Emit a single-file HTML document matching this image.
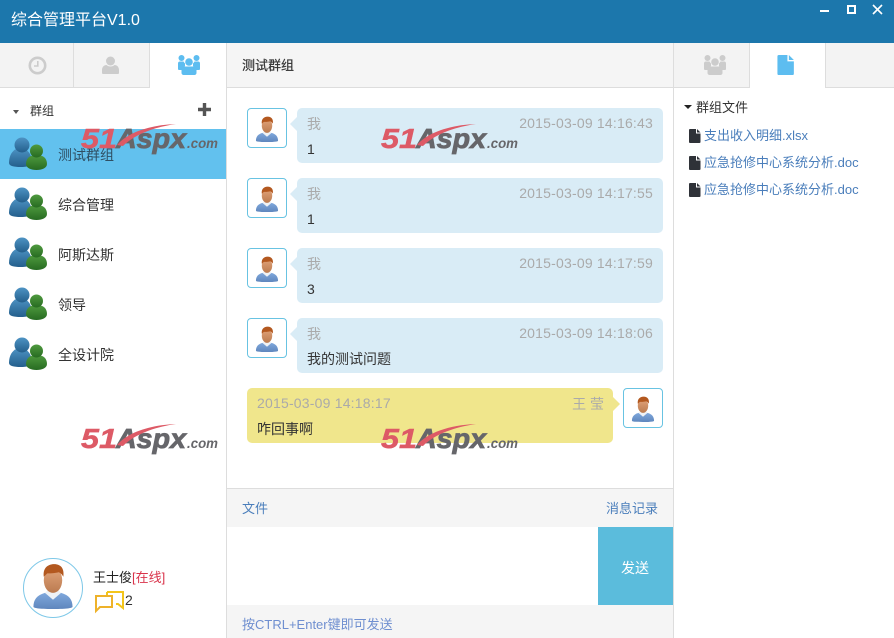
<!DOCTYPE html>
<html lang="zh">
<head>
<meta charset="utf-8">
<title>综合管理平台</title>
<style>
html,body{margin:0;padding:0;width:894px;height:638px;overflow:hidden;background:#fff}
body{position:relative;font-family:"Liberation Sans","Noto Sans CJK SC",sans-serif;font-size:13px;color:#333}
.a{position:absolute;white-space:nowrap;line-height:18px}
.l{font-size:14px;color:#333}
svg{position:absolute;display:block;overflow:visible}
.bubble{position:absolute;width:366px;height:55px;background:#d9ecf6;border-radius:5px}
.bubble:before{content:"";position:absolute;left:-7px;top:9px;border:7px solid transparent;border-left:0;border-right-color:#d9ecf6}
.bubble.y{background:#f0e68c}
.bubble.y:before{left:auto;right:-7px;border:7px solid transparent;border-right:0;border-left-color:#f0e68c}
.av{position:absolute;width:38px;height:38px;border:1px solid #68c3e2;border-radius:4px;background:#fff}
.who{position:absolute;top:7px;color:#aaa;font-size:14px;line-height:18px}
.ts{position:absolute;top:6px;color:#aaa;font-size:14px;line-height:18px;letter-spacing:.2px}
.msg{position:absolute;left:10px;top:32px;color:#333;font-size:14px;line-height:18px}
.link{color:#4a7ebb}
.wm{left:0;top:0;font-family:"Liberation Sans",sans-serif;font-weight:bold;font-style:italic}
</style>
</head>
<body>
<svg width="0" height="0" style="position:absolute">
<defs>
<linearGradient id="sk" x1="0" y1="0" x2="0" y2="1"><stop offset="0" stop-color="#e2a47a"/><stop offset="1" stop-color="#bb7b50"/></linearGradient>
<linearGradient id="sh" x1="0" y1="0" x2="0" y2="1"><stop offset="0" stop-color="#7fa8dc"/><stop offset="1" stop-color="#5f86bd"/></linearGradient>
<linearGradient id="bl" x1="0" y1="0" x2="0" y2="1"><stop offset="0" stop-color="#4d93c4"/><stop offset="1" stop-color="#245f8c"/></linearGradient>
<linearGradient id="gr" x1="0" y1="0" x2="0" y2="1"><stop offset="0" stop-color="#4f9a3e"/><stop offset="1" stop-color="#276b22"/></linearGradient>
<symbol id="person" viewBox="0 0 40 40">
<path d="M3 38c0-6 3-10 10-12l7 3 7-3c7 2 10 6 10 12 0 1-4 2-17 2S3 39 3 38z" fill="url(#sh)"/>
<path d="M13 26l7 6 7-6-2-2H15z" fill="#eef2f6"/>
<ellipse cx="20" cy="15" rx="8" ry="11" fill="url(#sk)"/>
<path d="M12 12C11 5 15 1 21 1c6 0 9 4 8 11-1-2-2-3-4-4-4 1-8 1-10 1-1 1-2 2-3 3z" fill="#b3581f"/>
</symbol>
<symbol id="msn" viewBox="0 0 38 38">
<path d="M0 27c0-9 5-15 11.500-15S23 18 23 27c0 3-5 4-11.500 4S0 30 0 27z" fill="url(#bl)"/>
<circle cx="13" cy="9" r="7.500" fill="url(#bl)"/>
<path d="M17 28c0-6 4-9 10.500-9S38 22 38 28c0 4-5 6-10.500 6S17 32 17 28z" fill="url(#gr)"/>
<circle cx="27.500" cy="15" r="6.500" fill="url(#gr)"/>
</symbol>
<symbol id="grp" viewBox="0 0 22 20">
<circle cx="3.500" cy="3" r="3"/><circle cx="18.500" cy="3" r="3"/><circle cx="11" cy="7" r="3.800"/>
<path d="M0 8.500a2 2 0 0 1 2-2h3.500q.5 1 1.500 2v2.500l-2.500 4H1a1 1 0 0 1-1-1z"/>
<path d="M22 8.500a2 2 0 0 0-2-2h-3.500q-.5 1-1.500 2v2.500l2.500 4H21a1 1 0 0 0 1-1z"/>
<path d="M7 11.500h8c2 0 3.500 1.500 3.500 3.500v3c0 1-1 2-2 2H5.500c-1 0-2-1-2-2v-3c0-2 1.500-3.500 3.500-3.500z"/>
</symbol>
<symbol id="doc" viewBox="0 0 12 14">
<path d="M1 0h6v4.500h4.500V13a1 1 0 0 1-1 1H1a1 1 0 0 1-1-1V1a1 1 0 0 1 1-1zM8 0l3.500 3.500H8z"/>
</symbol>
</defs>
</svg>

<!-- title bar -->
<div class="a" style="left:0;top:0;width:894px;height:43px;background:#1c77ac"></div>
<div class="a" style="left:11px;top:10px;font-size:16px;line-height:21px;color:#fff">综合管理平台V1.0</div>
<div class="a" style="left:820px;top:10px;width:9px;height:2px;background:#fff"></div>
<div class="a" style="left:847px;top:5px;width:5px;height:5px;border:2px solid #fff"></div>
<svg style="left:872px;top:4px" width="11" height="11"><path d="M1 1l9 9M10 1l-9 9" stroke="#fff" stroke-width="1.600" fill="none"/></svg>

<!-- left panel -->
<div class="a" style="left:0;top:43px;width:150px;height:45px;background:#f3f3f3;border-bottom:1px solid #ddd;box-sizing:border-box"></div>
<div class="a" style="left:73px;top:43px;width:1px;height:44px;background:#ddd"></div>
<div class="a" style="left:149px;top:43px;width:1px;height:45px;background:#ddd"></div>
<div class="a" style="left:226px;top:43px;width:1px;height:595px;background:#ddd"></div>
<svg style="left:28px;top:56px" width="19" height="19" viewBox="0 0 19 19"><circle cx="9.500" cy="9.500" r="7.700" fill="none" stroke="#ccc" stroke-width="2.600"/><path d="M9.800 5v5H6" fill="none" stroke="#ccc" stroke-width="1.600"/></svg>
<svg style="left:102px;top:56px;fill:#ccc" width="17" height="18" viewBox="0 0 17 18"><circle cx="8.500" cy="5" r="4.500"/><path d="M0 17v-3c0-3 2-5 4.500-5 1 1 2.500 1.500 4 1.500s3-.5 4-1.500c2.500 0 4.500 2 4.500 5v3c0 .5-.5 1-1 1H1c-.5 0-1-.5-1-1z"/></svg>
<svg style="left:178px;top:55px;fill:#5dbdf0" width="22" height="20"><use href="#grp" width="22" height="20"/></svg>

<div class="a" style="left:13px;top:110px;width:0;height:0;border:3.500px solid transparent;border-top:4px solid #555;border-bottom:0"></div>
<div class="a" style="left:30px;top:102px;font-size:12px;color:#333">群组</div>
<svg style="left:198px;top:103px" width="13" height="13"><path d="M6.500 0v13M0 6.500h13" stroke="#555" stroke-width="3.400"/></svg>

<div class="a" style="left:0;top:129px;width:226px;height:50px;background:#62c1ee"></div>
<svg style="left:9px;top:136px" width="38" height="38"><use href="#msn" width="38" height="38"/></svg>
<div class="a l" style="left:58px;top:146px;color:#2f4f63">测试群组</div>
<svg style="left:9px;top:186px" width="38" height="38"><use href="#msn" width="38" height="38"/></svg>
<div class="a l" style="left:58px;top:196px">综合管理</div>
<svg style="left:9px;top:236px" width="38" height="38"><use href="#msn" width="38" height="38"/></svg>
<div class="a l" style="left:58px;top:246px">阿斯达斯</div>
<svg style="left:9px;top:286px" width="38" height="38"><use href="#msn" width="38" height="38"/></svg>
<div class="a l" style="left:58px;top:296px">领导</div>
<svg style="left:9px;top:336px" width="38" height="38"><use href="#msn" width="38" height="38"/></svg>
<div class="a l" style="left:58px;top:346px">全设计院</div>

<!-- user -->
<div class="a" style="left:23px;top:558px;width:58px;height:58px;border:1px solid #7ec8e8;border-radius:50%;background:#fff"></div>
<svg style="left:29.500px;top:563px" width="46" height="46"><use href="#person" width="46" height="46"/></svg>
<div class="a" style="left:93px;top:569px;color:#222">王士俊<span style="color:#d9334a">[在线]</span></div>
<svg style="left:94px;top:591px" width="31" height="23" viewBox="0 0 31 23" fill="none" stroke-width="2"><path d="M13 1h16v16l-5-4h-2" stroke="#f3c51b"/><path d="M13 1v3" stroke="#f3c51b"/><path d="M2 5h16v11H6l-4 4z" stroke="#eeb22a" fill="#fff"/></svg>
<div class="a" style="left:125px;top:591px;font-size:14px">2</div>

<!-- middle -->
<div class="a" style="left:227px;top:43px;width:446px;height:44px;background:#f5f5f5;border-bottom:1px solid #ddd"></div>
<div class="a" style="left:242px;top:57px;color:#333;font-size:13px;-webkit-text-stroke:.2px #333">测试群组</div>

<div class="av" style="left:247px;top:108px"><svg style="left:6px;top:7px" width="26" height="26"><use href="#person" width="26" height="26"/></svg></div>
<div class="bubble" style="left:297px;top:108px"><div class="who" style="left:10px">我</div><div class="ts" style="right:10px">2015-03-09 14:16:43</div><div class="msg">1</div></div>
<div class="av" style="left:247px;top:178px"><svg style="left:6px;top:7px" width="26" height="26"><use href="#person" width="26" height="26"/></svg></div>
<div class="bubble" style="left:297px;top:178px"><div class="who" style="left:10px">我</div><div class="ts" style="right:10px">2015-03-09 14:17:55</div><div class="msg">1</div></div>
<div class="av" style="left:247px;top:248px"><svg style="left:6px;top:7px" width="26" height="26"><use href="#person" width="26" height="26"/></svg></div>
<div class="bubble" style="left:297px;top:248px"><div class="who" style="left:10px">我</div><div class="ts" style="right:10px">2015-03-09 14:17:59</div><div class="msg">3</div></div>
<div class="av" style="left:247px;top:318px"><svg style="left:6px;top:7px" width="26" height="26"><use href="#person" width="26" height="26"/></svg></div>
<div class="bubble" style="left:297px;top:318px"><div class="who" style="left:10px">我</div><div class="ts" style="right:10px">2015-03-09 14:18:06</div><div class="msg">我的测试问题</div></div>
<div class="bubble y" style="left:247px;top:388px"><div class="ts" style="left:10px">2015-03-09 14:18:17</div><div class="who" style="right:9px">王 莹</div><div class="msg">咋回事啊</div></div>
<div class="av" style="left:623px;top:388px"><svg style="left:6px;top:7px" width="26" height="26"><use href="#person" width="26" height="26"/></svg></div>

<div class="a" style="left:227px;top:488px;width:446px;height:39px;background:#f5f5f5;border-top:1px solid #ddd;box-sizing:border-box"></div>
<div class="a link" style="left:242px;top:500px">文件</div>
<div class="a link" style="left:606px;top:500px">消息记录</div>
<div class="a" style="left:598px;top:527px;width:75px;height:78px;background:#5bbcdc"></div>
<div class="a" style="left:621px;top:559px;font-size:14px;color:#fff">发送</div>
<div class="a" style="left:227px;top:605px;width:446px;height:33px;background:#f5f5f5"></div>
<div class="a" style="left:242px;top:616px;color:#6f8fd0">按CTRL+Enter键即可发送</div>

<!-- right -->
<div class="a" style="left:673px;top:43px;width:1px;height:595px;background:#ddd"></div>
<div class="a" style="left:674px;top:43px;width:220px;height:45px;background:#f3f3f3;border-bottom:1px solid #ddd;box-sizing:border-box"></div>
<div class="a" style="left:749px;top:43px;width:77px;height:45px;background:#fff;border-left:1px solid #ddd;border-right:1px solid #ddd;box-sizing:border-box"></div>
<svg style="left:704px;top:55px;fill:#ccc" width="22" height="20"><use href="#grp" width="22" height="20"/></svg>
<svg style="left:777px;top:55px;fill:#5dbdf0" width="18" height="20"><use href="#doc" width="18" height="20"/></svg>

<div class="a" style="left:684px;top:105px;width:0;height:0;border:4px solid transparent;border-top:4.500px solid #222;border-bottom:0"></div>
<div class="a" style="left:696px;top:99px;color:#333">群组文件</div>
<svg style="left:689px;top:129px;fill:#2f3238" width="12" height="14"><use href="#doc" width="12" height="14"/></svg>
<div class="a link" style="left:704px;top:127px">支出收入明细.xlsx</div>
<svg style="left:689px;top:156px;fill:#2f3238" width="12" height="14"><use href="#doc" width="12" height="14"/></svg>
<div class="a link" style="left:704px;top:154px">应急抢修中心系统分析.doc</div>
<svg style="left:689px;top:183px;fill:#2f3238" width="12" height="14"><use href="#doc" width="12" height="14"/></svg>
<div class="a link" style="left:704px;top:181px">应急抢修中心系统分析.doc</div>

<!-- watermarks -->
<svg class="wm" width="894" height="638" viewBox="0 0 894 638" style="left:0;top:0;pointer-events:none">
<g transform="translate(81,124)">
<text x="0" y="24" font-size="28" fill="#dd5a66" stroke="#dd5a66" stroke-width=".5" textLength="36" lengthAdjust="spacingAndGlyphs">51</text>
<text x="35" y="24" font-size="28" fill="#66666a" stroke="#66666a" stroke-width=".8" textLength="70" lengthAdjust="spacingAndGlyphs">Aspx</text>
<text x="106" y="24" font-size="14" fill="#66666a" textLength="31" lengthAdjust="spacingAndGlyphs">.com</text>
<path d="M36 21C46 9 68 1 95 0 74 3 54 10 42 22z" fill="#dd5a66"/>
</g>
<g transform="translate(381,124)">
<text x="0" y="24" font-size="28" fill="#dd5a66" stroke="#dd5a66" stroke-width=".5" textLength="36" lengthAdjust="spacingAndGlyphs">51</text>
<text x="35" y="24" font-size="28" fill="#66666a" stroke="#66666a" stroke-width=".8" textLength="70" lengthAdjust="spacingAndGlyphs">Aspx</text>
<text x="106" y="24" font-size="14" fill="#66666a" textLength="31" lengthAdjust="spacingAndGlyphs">.com</text>
<path d="M36 21C46 9 68 1 95 0 74 3 54 10 42 22z" fill="#dd5a66"/>
</g>
<g transform="translate(81,424)">
<text x="0" y="24" font-size="28" fill="#dd5a66" stroke="#dd5a66" stroke-width=".5" textLength="36" lengthAdjust="spacingAndGlyphs">51</text>
<text x="35" y="24" font-size="28" fill="#66666a" stroke="#66666a" stroke-width=".8" textLength="70" lengthAdjust="spacingAndGlyphs">Aspx</text>
<text x="106" y="24" font-size="14" fill="#66666a" textLength="31" lengthAdjust="spacingAndGlyphs">.com</text>
<path d="M36 21C46 9 68 1 95 0 74 3 54 10 42 22z" fill="#dd5a66"/>
</g>
<g transform="translate(381,424)">
<text x="0" y="24" font-size="28" fill="#dd5a66" stroke="#dd5a66" stroke-width=".5" textLength="36" lengthAdjust="spacingAndGlyphs">51</text>
<text x="35" y="24" font-size="28" fill="#66666a" stroke="#66666a" stroke-width=".8" textLength="70" lengthAdjust="spacingAndGlyphs">Aspx</text>
<text x="106" y="24" font-size="14" fill="#66666a" textLength="31" lengthAdjust="spacingAndGlyphs">.com</text>
<path d="M36 21C46 9 68 1 95 0 74 3 54 10 42 22z" fill="#dd5a66"/>
</g>
</svg>
</body>
</html>
